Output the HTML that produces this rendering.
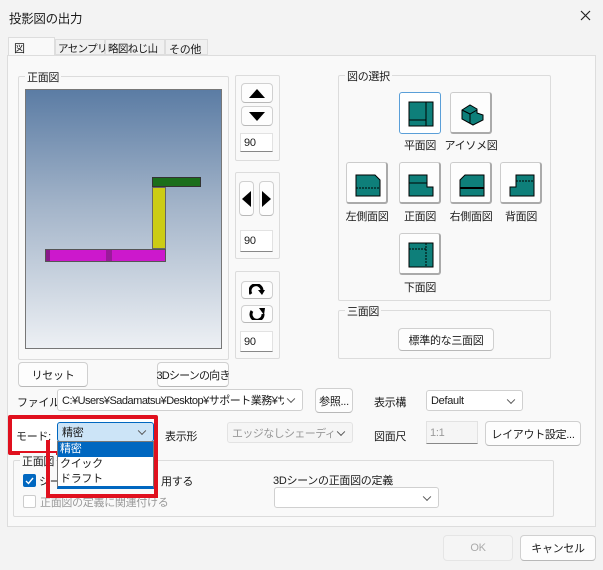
<!DOCTYPE html>
<html><head><meta charset="utf-8"><style>
*{box-sizing:border-box;margin:0;padding:0}
body{width:603px;height:570px;background:#f3f3f3;font-family:"Liberation Sans","Noto Sans CJK JP",sans-serif;font-size:11px;color:#1a1a1a;position:relative;overflow:hidden;white-space:nowrap;letter-spacing:-0.3px}
.a{position:absolute}
.grp{position:absolute;border:1px solid #dcdcdc;border-radius:2px}
.gl{position:absolute;top:-8px;left:6px;background:#f9f9f9;padding:0 2px}
.btn{position:absolute;background:#fdfdfd;border:1px solid #d0d0d0;border-radius:4px;border-bottom-color:#b8b8b8;display:flex;align-items:center;justify-content:center}
.inp{position:absolute;background:#fff;border:1px solid #e2e2e2;border-bottom:1px solid #888;padding-left:3px;display:flex;align-items:center}
.cmb{position:absolute;background:#fff;border:1px solid #d0d0d0;border-radius:3px;padding-left:4px;display:flex;align-items:center;overflow:hidden}
.cmb:after{content:"";position:absolute;right:8px;top:50%;width:5px;height:5px;border-right:1px solid #555;border-bottom:1px solid #555;transform:translateY(-70%) rotate(45deg)}
.ib{position:absolute;width:42px;height:42px;background:#fdfdfd;border:1px solid #ccc;border-right:2px solid #aaa;border-bottom:2px solid #aaa;border-radius:3px}
.ib svg{position:absolute;left:8px;top:8px}
.lb{position:absolute;text-align:center;width:70px}
</style></head><body>
<div class="a" style="left:9px;top:8px;font-size:12.5px">投影図の出力</div>
<svg class="a" style="left:580px;top:10px" width="11" height="11"><path d="M1 1L10 10M10 1L1 10" stroke="#222" stroke-width="1.2"/></svg>
<div class="a" style="left:8px;top:37px;width:47px;height:19px;background:#f9f9f9;border:1px solid #ddd;border-bottom:none;padding:2px 5px">図</div>
<div class="a" style="left:55px;top:39px;width:50px;height:16px;background:#f0f0f0;border:1px solid #ddd;padding:1px 2px;font-size:10.5px;letter-spacing:-0.6px">アセンプリ</div>
<div class="a" style="left:105px;top:39px;width:60px;height:16px;background:#f0f0f0;border:1px solid #ddd;padding:1px 2px;font-size:10.5px;letter-spacing:-0.6px">略図ねじ山</div>
<div class="a" style="left:165px;top:39px;width:43px;height:16px;background:#f0f0f0;border:1px solid #ddd;padding:1px 3px">その他</div>
<div class="a" style="left:7px;top:55px;width:589px;height:472px;background:#f9f9f9;border:1px solid #ddd"></div>
<div class="grp" style="left:18px;top:76px;width:211px;height:284px"><span class="gl">正面図</span></div>
<div class="a" style="left:25px;top:89px;width:197px;height:260px;border:1px solid #777;background:linear-gradient(#5b7ca4,#a3b4c9 45%,#edf0f4)"></div>
<div class="a" style="left:152px;top:177px;width:49px;height:10px;background:#1b6e1b;border:1px solid #333"></div>
<div class="a" style="left:152px;top:187px;width:14px;height:62px;background:#cccc14;border:1px solid #666"></div>
<div class="a" style="left:45px;top:249px;width:121px;height:13px;background:#cc18cc;border:1px solid #555"></div>
<div class="a" style="left:46px;top:250px;width:4px;height:11px;background:#8a1a8a"></div>
<div class="a" style="left:106px;top:250px;width:6px;height:11px;background:#9a1a9a"></div>
<div class="grp" style="left:235px;top:75px;width:45px;height:86px"></div>
<div class="btn" style="left:241px;top:83px;width:32px;height:20px"><svg width="16" height="9"><path d="M0 9L8 0L16 9Z"/></svg></div>
<div class="btn" style="left:241px;top:106px;width:32px;height:20px"><svg width="16" height="9"><path d="M0 0L8 9L16 0Z"/></svg></div>
<div class="inp" style="left:240px;top:133px;width:33px;height:19px">90</div>
<div class="grp" style="left:235px;top:172px;width:45px;height:87px"></div>
<div class="btn" style="left:239px;top:181px;width:15px;height:35px"><svg width="9" height="16"><path d="M9 0L0 8L9 16Z"/></svg></div>
<div class="btn" style="left:259px;top:181px;width:15px;height:35px"><svg width="9" height="16"><path d="M0 0L9 8L0 16Z"/></svg></div>
<div class="inp" style="left:240px;top:230px;width:33px;height:22px">90</div>
<div class="grp" style="left:235px;top:271px;width:45px;height:88px"></div>
<div class="btn" style="left:241px;top:281px;width:32px;height:18px"><svg width="16" height="12"><path d="M2 10A6 6 0 1 1 13 7" fill="none" stroke="#000" stroke-width="3"/><path d="M9 6L16 6L13 11Z"/></svg></div>
<div class="btn" style="left:241px;top:305px;width:32px;height:18px"><svg width="16" height="12"><path d="M3 3A6 6 0 1 0 14 6" fill="none" stroke="#000" stroke-width="3"/><path d="M10 0L16 0L15 7Z"/></svg></div>
<div class="inp" style="left:240px;top:331px;width:33px;height:21px">90</div>
<div class="btn" style="left:18px;top:362px;width:70px;height:25px">リセット</div>
<div class="btn" style="left:157px;top:362px;width:72px;height:25px;letter-spacing:-0.8px">3Dシーンの向き</div>
<div class="grp" style="left:338px;top:75px;width:213px;height:226px"><span class="gl">図の選択</span></div>
<div class="ib" style="left:399px;top:92px;border:1px solid #5a9fd8;background:#fff"><svg width="26" height="26"><rect x="1" y="1" width="24" height="24" fill="#0e7f7a" stroke="#000"/><path d="M18 1V25M1 19H18" stroke="#000"/></svg></div>
<div class="lb" style="left:385px;top:137px">平面図</div>
<div class="ib" style="left:450px;top:92px"><svg width="26" height="26"><path d="M3 9L11 4L18 8L18 12L24 14L24 19L14 24L3 18Z" fill="#0e7f7a" stroke="#000"/><path d="M3 9L11 13L18 9M11 13V22" stroke="#000" fill="none"/></svg></div>
<div class="lb" style="left:436px;top:137px">アイソメ図</div>
<div class="ib" style="left:346px;top:162px"><svg width="26" height="26"><path d="M1 4H20L25 9V25H1Z" fill="#0e7f7a" stroke="#000"/><path d="M1 17H25" stroke="#000" stroke-dasharray="2 1"/></svg></div>
<div class="lb" style="left:332px;top:208px">左側面図</div>
<div class="ib" style="left:399px;top:162px"><svg width="26" height="26"><path d="M1 4H19V16H25V25H1Z" fill="#0e7f7a" stroke="#000"/><path d="M1 12H19" stroke="#000"/></svg></div>
<div class="lb" style="left:385px;top:208px">正面図</div>
<div class="ib" style="left:450px;top:162px"><svg width="26" height="26"><path d="M6 4H25V25H1V9Z" fill="#0e7f7a" stroke="#000"/><path d="M1 17H25" stroke="#000" stroke-width="2"/></svg></div>
<div class="lb" style="left:436px;top:208px">右側面図</div>
<div class="ib" style="left:500px;top:162px"><svg width="26" height="26"><path d="M7 4H25V25H1V16H7Z" fill="#0e7f7a" stroke="#000"/><path d="M7 10H25" stroke="#000" stroke-dasharray="2 1"/></svg></div>
<div class="lb" style="left:486px;top:208px">背面図</div>
<div class="ib" style="left:399px;top:233px"><svg width="26" height="26"><rect x="1" y="1" width="24" height="24" fill="#0e7f7a" stroke="#000"/><path d="M18 1V25M1 7H18" stroke="#000" stroke-dasharray="2 1"/></svg></div>
<div class="lb" style="left:385px;top:279px">下面図</div>
<div class="grp" style="left:338px;top:310px;width:213px;height:49px"><span class="gl">三面図</span></div>
<div class="btn" style="left:398px;top:328px;width:96px;height:23px">標準的な三面図</div>
<div class="a" style="left:17px;top:394px">ファイル:</div>
<div class="cmb" style="left:57px;top:389px;width:246px;height:22px;letter-spacing:-0.5px"><span style="width:222px;overflow:hidden">C:¥Users¥Sadamatsu¥Desktop¥サポート業務¥サ</span></div>
<div class="btn" style="left:315px;top:388px;width:38px;height:25px">参照...</div>
<div class="a" style="left:374px;top:394px">表示構</div>
<div class="cmb" style="left:426px;top:390px;width:97px;height:21px">Default</div>
<div class="a" style="left:8px;top:415px;width:150px;height:40px;border:4px solid #e0101e;border-radius:2px;background:#fff"></div>
<div class="a" style="left:46px;top:440px;width:112px;height:58px;border:4px solid #e0101e;border-top:none"></div>
<div class="a" style="left:16px;top:428px">モード:</div>
<div class="cmb" style="left:57px;top:422px;width:97px;height:20px;background:#cce4f7;border-color:#0067c0">精密</div>
<div class="a" style="left:165px;top:428px">表示形</div>
<div class="cmb" style="left:227px;top:422px;width:126px;height:21px;background:#f5f5f5;color:#999;border-color:#e3e3e3;letter-spacing:-0.6px"><span style="width:105px;overflow:hidden">エッジなしシェーディング</span></div>
<div class="a" style="left:374px;top:428px">図面尺</div>
<div class="inp" style="left:426px;top:421px;width:52px;height:23px;background:#f5f5f5;color:#999">1:1</div>
<div class="btn" style="left:485px;top:421px;width:96px;height:25px">レイアウト設定...</div>
<div class="grp" style="left:13px;top:460px;width:541px;height:57px"><span class="gl">正面図</span></div>
<div class="a" style="left:23px;top:474px;width:13px;height:13px;background:#0067c0;border-radius:2px"><svg width="13" height="13"><path d="M3 7L5.5 9.5L10 4" stroke="#fff" fill="none" stroke-width="1.4"/></svg></div>
<div class="a" style="left:39px;top:473px">シーン</div>
<div class="a" style="left:161px;top:473px">用する</div>
<div class="a" style="left:23px;top:495px;width:13px;height:13px;border:1px solid #ccc;border-radius:2px;background:#fff"></div>
<div class="a" style="left:40px;top:494px;color:#999">正面図の定義に関連付ける</div>
<div class="a" style="left:273px;top:472px">3Dシーンの正面図の定義</div>
<div class="cmb" style="left:274px;top:487px;width:165px;height:21px"></div>
<div class="a" style="left:46px;top:440px;width:112px;height:58px;border:4px solid #e0101e;border-top:none"></div>
<div class="a" style="left:57px;top:441px;width:97px;height:48px;background:#fff;border:1px solid #777;border-bottom:3px solid #0067c0">
<div style="background:#0067c0;color:#fff;height:15px;padding-left:2px;line-height:15px">精密</div>
<div style="height:15px;padding-left:2px;line-height:15px">クイック</div>
<div style="height:15px;padding-left:2px;line-height:15px">ドラフト</div></div>
<div class="btn" style="left:443px;top:535px;width:70px;height:26px;background:#f5f5f5;color:#aaa;border-color:#e5e5e5">OK</div>
<div class="btn" style="left:520px;top:535px;width:76px;height:26px">キャンセル</div>
</body></html>
